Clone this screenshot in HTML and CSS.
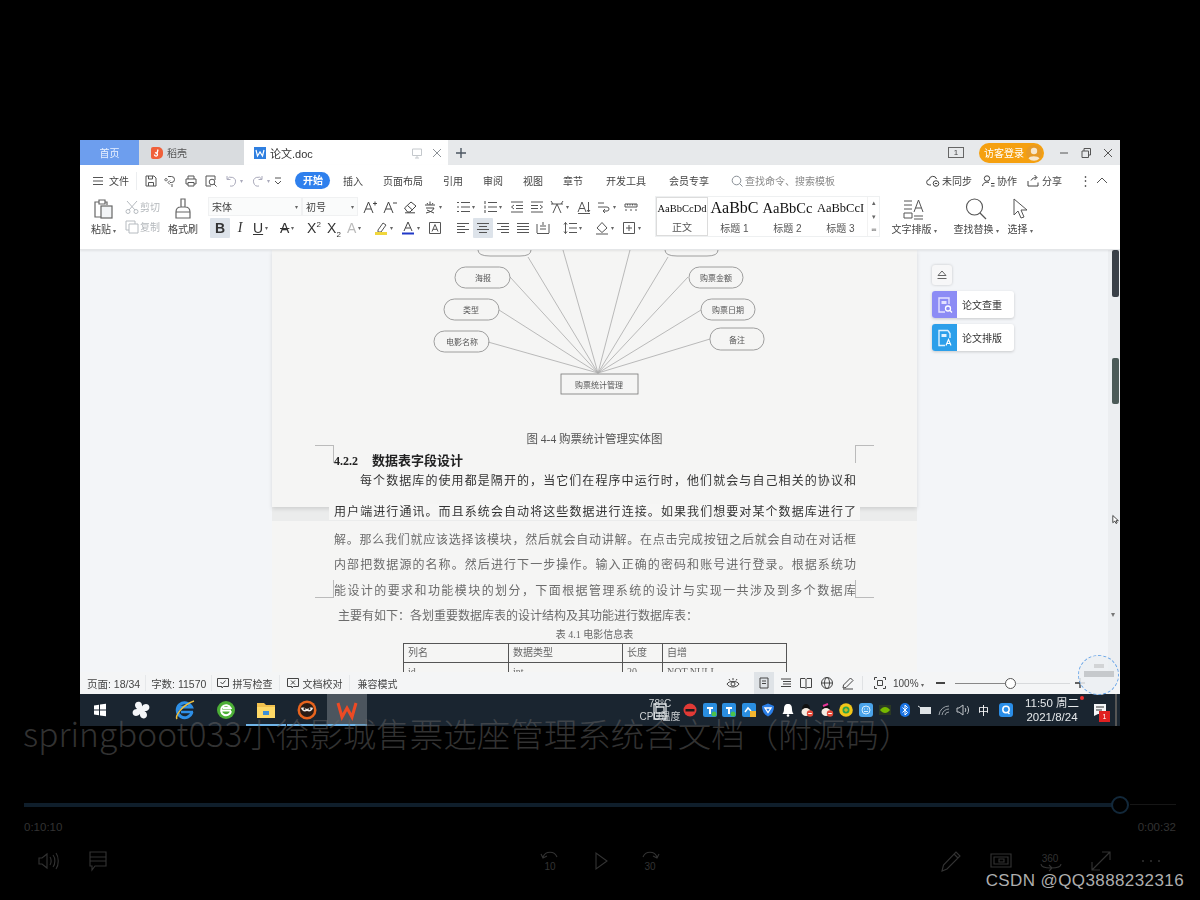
FILE: index.html
```html
<!DOCTYPE html>
<html lang="zh-CN">
<head>
<meta charset="utf-8">
<title>视频播放</title>
<link rel="stylesheet" href="styles.css">
</head>
<body>
<div class="player">
  <main class="screen">
    <div class="tabbar">
      <div class="tab tab-home">首页</div>
      <div class="tab tab-shell"><svg class="i14" viewBox="0 0 14 14"><path d="M3 1h5a5 5 0 0 1 5 5v2a5 5 0 0 1-5 5H3a2 2 0 0 1-2-2V3a2 2 0 0 1 2-2z" fill="#f0603a"/><path d="M8 3.500 7 7.500 5 6.500M7 7.500a1.500 1.500 0 1 1-2.500 1" fill="none" stroke="#fff" stroke-width="1.300"/></svg>稻壳</div>
      <div class="tab tab-doc"><svg class="i14" viewBox="0 0 14 14"><rect x="1" y="1" width="12" height="12" fill="#2f7fe0"/><path d="M3 4l1.500 6L7 6l2.500 4L11 4" fill="none" stroke="#fff" stroke-width="1.200"/></svg><span class="doc-name">论文.doc</span>
        <svg class="i12 doc-pin" viewBox="0 0 12 12"><path d="M1.500 2h9v6.500h-9zM6 8.500V11M4 11h4" fill="none" stroke="#c4c8cc"/></svg>
        <svg class="i12" viewBox="0 0 12 12"><path d="M2 2l8 8M10 2l-8 8" stroke="#8d9297" fill="none"/></svg>
      </div>
      <div class="tab-plus"><svg class="i12" viewBox="0 0 12 12"><path d="M6 1v10M1 6h10" stroke="#4c5661" stroke-width="1.400" fill="none"/></svg></div>
      <div class="tab-right">
        <div class="page-badge">1</div>
        <div class="login">访客登录<span class="avatar"><svg viewBox="0 0 16 16"><circle cx="8" cy="8" r="8" fill="#e79a25"/><circle cx="8" cy="6" r="3.200" fill="#f7e6ca"/><path d="M2.500 13.500c1-3 9.500-3 11 0a8 8 0 0 1-11 0z" fill="#f7e6ca"/></svg></span></div>
        <svg class="i12" viewBox="0 0 12 12"><path d="M2 6h8" stroke="#555" fill="none"/></svg>
        <svg class="i12" viewBox="0 0 12 12"><path d="M2 4h6.500v6.500H2zM4 4V1.500h6.500V8H8.500" stroke="#555" fill="none"/></svg>
        <svg class="i12" viewBox="0 0 12 12"><path d="M2 2l8 8M10 2l-8 8" stroke="#555" fill="none"/></svg>
      </div>
    </div>

    <div class="ribbon">
      <div class="menu">
        <div class="file-menu"><svg class="i12" viewBox="0 0 12 12"><path d="M1 2.500h10M1 6h10M1 9.500h10" stroke="#555" fill="none"/></svg>文件</div>
        <div class="quick">
          <svg class="i14" viewBox="0 0 14 14"><path d="M2 2h8l2 2v8H2zM4.500 2v3h4V2M4.500 12V8.500h5V12" fill="none" stroke="#555"/></svg>
          <svg class="i14" viewBox="0 0 14 14"><path d="M4 2.500h3.500a3 3 0 0 1 0 6H6M6 6.500 4 8.500l2 2M2 4.500a1.200 1.200 0 1 0 .1 0M8 10v3" fill="none" stroke="#555"/></svg>
          <svg class="i14" viewBox="0 0 14 14"><path d="M4 5V2h6v3M4 10H2V5h10v5h-2M4 8.500h6V12H4z" fill="none" stroke="#555"/></svg>
          <svg class="i14" viewBox="0 0 14 14"><path d="M11 6V2H2v10h5" fill="none" stroke="#555"/><circle cx="8" cy="8" r="2.800" fill="none" stroke="#555"/><path d="M10 10l2.500 2.500" stroke="#555"/></svg>
          <svg class="i14 dim" viewBox="0 0 14 14"><path d="M3 2v3.500h3.500M3 5.500A4.500 4.500 0 1 1 6 12" fill="none" stroke="#aab"/></svg><span class="caret dim-caret">▾</span>
          <svg class="i14 dim redo" viewBox="0 0 14 14"><path d="M11 2v3.500H7.500M11 5.500A4.500 4.500 0 1 0 8 12" fill="none" stroke="#aab"/></svg><span class="caret dim-caret">▾</span>
          <svg class="i12 more" viewBox="0 0 12 12"><path d="M3 3h6M3 6l3 3 3-3" fill="none" stroke="#555"/></svg>
        </div>
        <div class="tabs-menu">
          <span class="pill">开始</span><span>插入</span><span>页面布局</span><span>引用</span><span>审阅</span><span>视图</span><span>章节</span><span class="wide-gap">开发工具</span><span class="wide-gap">会员专享</span>
        </div>
        <div class="search"><svg class="i12" viewBox="0 0 12 12"><circle cx="5.500" cy="5.500" r="4.300" fill="none" stroke="#8a9097"/><path d="M8.500 8.500l3 3" stroke="#8a9097"/></svg>查找命令、搜索模板</div>
        <div class="actions">
          <span class="act"><svg class="i14" viewBox="0 0 14 14"><path d="M5 11H3.500a2.700 2.700 0 0 1-.3-5.400 3.800 3.800 0 0 1 7.400-.6" fill="none" stroke="#444"/><circle cx="10" cy="9.500" r="2.800" fill="none" stroke="#444"/><path d="M8.800 9.500h2.400" stroke="#444"/></svg>未同步</span>
          <span class="act"><svg class="i14" viewBox="0 0 14 14"><circle cx="6" cy="4.500" r="2.700" fill="none" stroke="#444"/><path d="M1.500 12c.5-3.500 4-4.500 6.500-3.500M10 9.500h3.500M10 12h3.500" fill="none" stroke="#444"/></svg>协作</span>
          <span class="act"><svg class="i14" viewBox="0 0 14 14"><path d="M2 7v5h10V8.500M5 6.500c1-2 3-3 5.500-3M8.500 1l2.500 2.500L8.500 6" fill="none" stroke="#444"/></svg>分享</span>
          <span class="kebab">⋮</span>
          <svg class="i12" viewBox="0 0 12 12"><path d="M1 8l5-5 5 5" fill="none" stroke="#555"/></svg>
        </div>
      </div>

      <div class="tools">
        <div class="clip">
          <div class="big-btn paste">
            <svg class="i24" viewBox="0 0 24 24"><path d="M7 5H3v15h6M7 3h6v4H7zM13 5h2v3" fill="none" stroke="#666" stroke-width="1.200"/><rect x="9" y="9" width="11" height="12" fill="#f2f4f6" stroke="#666" stroke-width="1.200"/></svg>
            <span>粘贴<i class="caret">▾</i></span>
          </div>
          <div class="clip-small">
            <span class="muted"><svg class="i14" viewBox="0 0 14 14"><path d="M2 1l8 9M12 1 4 10" stroke="#b6bbc0" fill="none"/><circle cx="3" cy="11.500" r="2" fill="none" stroke="#b6bbc0"/><circle cx="11" cy="11.500" r="2" fill="none" stroke="#b6bbc0"/></svg>剪切</span>
            <span class="muted"><svg class="i14" viewBox="0 0 14 14"><path d="M4 4h9v9H4zM4 10H1V1h9v3" fill="none" stroke="#b6bbc0"/></svg>复制</span>
          </div>
          <div class="big-btn painter">
            <svg class="i24" viewBox="0 0 24 24"><path d="M10 2h4v8h-4zM5 15c0-3 2-5 5-5h4c3 0 5 2 5 5v6H5zM5 15h14" fill="none" stroke="#666" stroke-width="1.200"/></svg>
            <span>格式刷</span>
          </div>
        </div>

        <div class="font-group">
          <div class="t-row">
            <div class="combo combo-font">宋体<i class="caret">▾</i></div>
            <div class="combo combo-size">初号<i class="caret">▾</i></div>
            <span class="t first"><svg class="i14" viewBox="0 0 14 14"><path d="M1 13 5.500 2 10 13M2.800 9h5.400M10 3.500h4M12 1.500v4" fill="none" stroke="#444"/></svg></span>
            <span class="t"><svg class="i14" viewBox="0 0 14 14"><path d="M1 13 5.500 2 10 13M2.800 9h5.400M10 3h4" fill="none" stroke="#444"/></svg></span>
            <span class="t"><svg class="i14" viewBox="0 0 14 14"><path d="M1.500 8 8 2l5 4-6 6H4.500zM4.500 5.500l5 4.500M2 12.800h10" fill="none" stroke="#444"/></svg></span>
            <span class="t w27"><svg class="i14" viewBox="0 0 14 14"><path d="M2 5h10M7 1.500V5M4 3l1 1.500M10 3 9 4.500M3 8h8M11 8c-1 3-4 4-8 5M4 10c2 1 5 2 7 3" fill="none" stroke="#444"/></svg><i class="caret">▾</i></span>
          </div>
          <div class="t-row">
            <span class="t on"><b class="fmt">B</b></span>
            <span class="t"><i class="fmt ital">I</i></span>
            <span class="t w27"><span class="fmt under">U</span><i class="caret">▾</i></span>
            <span class="t w27"><span class="fmt strike">A</span><i class="caret">▾</i></span>
            <span class="t"><span class="fmt">X<sup>2</sup></span></span>
            <span class="t"><span class="fmt">X<sub>2</sub></span></span>
            <span class="t w27"><span class="fmt faded">A</span><i class="caret">▾</i></span>
            <span class="t w27"><svg class="i14" viewBox="0 0 14 14"><path d="M4 9l5-7 3 2-5 7H4z" fill="none" stroke="#555"/><rect x="1" y="11" width="12" height="3" fill="#f0d63c"/></svg><i class="caret">▾</i></span>
            <span class="t w27"><svg class="i14" viewBox="0 0 14 14"><path d="M3 10 7 1l4 9M4.500 7h5" fill="none" stroke="#444"/><rect x="1" y="11.500" width="12" height="2" fill="#2038c8"/></svg><i class="caret">▾</i></span>
            <span class="t"><svg class="i14" viewBox="0 0 14 14"><path d="M1.500 1.500h11v11h-11zM4 10.500 7 3.500l3 7M5 8.300h4" fill="none" stroke="#555"/></svg></span>
          </div>
        </div>

        <div class="para-group">
          <div class="t-row">
            <span class="t w27"><svg class="i14" viewBox="0 0 14 14"><path d="M5 2.500h9M5 7h9M5 11.500h9M1 2.500h2M1 7h2M1 11.500h2" fill="none" stroke="#555" stroke-width="1.100"/></svg><i class="caret">▾</i></span>
            <span class="t w27"><svg class="i14" viewBox="0 0 14 14"><path d="M5 2.500h9M5 7h9M5 11.500h9M2 1v3M2 5.500v3M2 10v3" fill="none" stroke="#555" stroke-width="1.100"/></svg><i class="caret">▾</i></span>
            <span class="t"><svg class="i14" viewBox="0 0 14 14"><path d="M1 2h12M6 5.500h7M6 8.500h7M1 12h12M4 5 1.500 7 4 9" fill="none" stroke="#555"/></svg></span>
            <span class="t"><svg class="i14" viewBox="0 0 14 14"><path d="M1 2h12M1 5.500h7M1 8.500h7M1 12h12M10 5l2.500 2L10 9" fill="none" stroke="#555"/></svg></span>
            <span class="t w27"><svg class="i14" viewBox="0 0 14 14"><path d="M1 4h12M3 13l4-9 4 9M1 1l2 3M13 1l-2 3" fill="none" stroke="#555"/></svg><i class="caret">▾</i></span>
            <span class="t"><svg class="i14" viewBox="0 0 14 14"><path d="M1 12 5 2l4 10M2.500 8.500h5M11.500 2v10M10 10l1.500 2 1.500-2M1 13.500h12" fill="none" stroke="#555"/></svg></span>
            <span class="t w27"><svg class="i14" viewBox="0 0 14 14"><path d="M1 3h6M1 7h9a2 2 0 0 1 0 4H6M8 9l-2 2 2 2" fill="none" stroke="#555"/></svg><i class="caret">▾</i></span>
            <span class="t"><svg class="i14" viewBox="0 0 14 14"><path d="M1 4h12v3H1zM3.500 4v1.500M6 4v1.500M8.500 4v1.500M11 4v1.500M1 10h2M6 10h2M11 10h2" fill="none" stroke="#555"/></svg></span>
          </div>
          <div class="t-row">
            <span class="t"><svg class="i14" viewBox="0 0 14 14"><path d="M1 2.500h12M1 5.500h8M1 8.500h12M1 11.500h8" fill="none" stroke="#555"/></svg></span>
            <span class="t on"><svg class="i14" viewBox="0 0 14 14"><path d="M1 2.500h12M3 5.500h8M1 8.500h12M3 11.500h8" fill="none" stroke="#555"/></svg></span>
            <span class="t"><svg class="i14" viewBox="0 0 14 14"><path d="M1 2.500h12M5 5.500h8M1 8.500h12M5 11.500h8" fill="none" stroke="#555"/></svg></span>
            <span class="t"><svg class="i14" viewBox="0 0 14 14"><path d="M1 2.500h12M1 5.500h12M1 8.500h12M1 11.500h12" fill="none" stroke="#555"/></svg></span>
            <span class="t"><svg class="i14" viewBox="0 0 14 14"><path d="M1 12.500h12M1 3v9M13 3v9M4 5h6M4 8h6M7 1v3" fill="none" stroke="#555"/></svg></span>
            <span class="t w27 spacing"><svg class="i14" viewBox="0 0 14 14"><path d="M6 2.500h8M6 7h8M6 11.500h8M2.500 1.500v11M1 3.500l1.500-2 1.500 2M1 10.500l1.500 2 1.500-2" fill="none" stroke="#555"/></svg><i class="caret">▾</i></span>
            <span class="t w27 shade"><svg class="i14" viewBox="0 0 14 14"><path d="M7 1.500 12 7l-5 4.500L2 7zM1 13h12" fill="none" stroke="#555"/></svg><i class="caret">▾</i></span>
            <span class="t w27"><svg class="i14" viewBox="0 0 14 14"><path d="M1.500 1.500h11v11h-11zM7 4v6M4 7h6" fill="none" stroke="#555"/></svg><i class="caret">▾</i></span>
          </div>
        </div>

        <div class="styles">
          <div class="style sel"><span class="pv pv0">AaBbCcDd</span><span class="lbl">正文</span></div>
          <div class="style"><span class="pv pv1">AaBbC</span><span class="lbl">标题 1</span></div>
          <div class="style"><span class="pv pv2">AaBbCc</span><span class="lbl">标题 2</span></div>
          <div class="style"><span class="pv pv3">AaBbCcI</span><span class="lbl">标题 3</span></div>
          <div class="style-scroll"><span>▴</span><span>▾</span><span>≂</span></div>
        </div>

        <div class="big-btn layout-btn">
          <svg class="i24" viewBox="0 0 24 24"><path d="M2 4h8M2 8h8M2 12h8M12 15 16.500 3 21 15M13.500 11h6M2 16h8v5H2zM12 19h9M12 22h9" fill="none" stroke="#555"/></svg>
          <span>文字排版<i class="caret">▾</i></span>
        </div>
        <div class="big-btn find-btn">
          <svg class="i24" viewBox="0 0 24 24"><circle cx="10.500" cy="10" r="8" fill="none" stroke="#555" stroke-width="1.100"/><path d="M16 16l6 6" stroke="#555" stroke-width="1.200"/></svg>
          <span>查找替换<i class="caret">▾</i></span>
        </div>
        <div class="big-btn select-btn">
          <svg class="i24" viewBox="0 0 24 24"><path d="M6 2v16l4-4 3 7 3-1-3-7h6z" fill="none" stroke="#555"/></svg>
          <span>选择<i class="caret">▾</i></span>
        </div>
      </div>
    </div>

    <div class="workspace">
      <div class="doc">
        <section class="sheet sheet-top">
          <svg class="er" viewBox="0 0 645 182" width="645" height="182">
            <g class="lines">
              <path d="M326 123 256 7M326 123 291 0M326 123 358 0M326 123 396 7M326 123 238 27M326 123 227 60M326 123 216 92M326 123 416 27M326 123 429 60M326 123 438 89"/>
            </g>
            <g class="nodes">
              <path d="M206 0q0 6 12 6h30q11 0 11-6M393 0q0 6 12 6h30q11 0 11-6"/>
              <rect x="183" y="17" width="55" height="21" rx="10.500"/>
              <rect x="172" y="49" width="55" height="21" rx="10.500"/>
              <rect x="162" y="81" width="55" height="21" rx="10.500"/>
              <rect x="417" y="17" width="54" height="21" rx="10.500"/>
              <rect x="429" y="49" width="54" height="21" rx="10.500"/>
              <rect x="438" y="78" width="54" height="22" rx="10.500"/>
              <rect class="box" x="289" y="124" width="77" height="20"/>
            </g>
            <g class="labels">
              <text x="211" y="31">海报</text>
              <text x="199" y="63">类型</text>
              <text x="190" y="95">电影名称</text>
              <text x="444" y="31">购票金额</text>
              <text x="456" y="63">购票日期</text>
              <text x="465" y="93">备注</text>
              <text x="327" y="138">购票统计管理</text>
            </g>
          </svg>
          <p class="caption">图 4-4 购票统计管理实体图</p>
          <h3 class="heading"><span class="hnum">4.2.2</span>数据表字段设计</h3>
          <p class="line indent">每个数据库的使用都是隔开的，当它们在程序中运行时，他们就会与自己相关的协议和</p>
          <span class="crop crop-tl"></span><span class="crop crop-tr"></span>
        </section>
        <div class="sheet-gap">
          <p class="line strip">用户端进行通讯。而且系统会自动将这些数据进行连接。如果我们想要对某个数据库进行了</p>
        </div>
        <section class="sheet sheet-bottom">
          <div class="smear">
            <p class="line">解。那么我们就应该选择该模块，然后就会自动讲解。在点击完成按钮之后就会自动在对话框</p>
            <p class="line">内部把数据源的名称。然后进行下一步操作。输入正确的密码和账号进行登录。根据系统功</p>
            <p class="line">能设计的要求和功能模块的划分，下面根据管理系统的设计与实现一共涉及到多个数据库</p>
            <p class="line last">主要有如下：各划重要数据库表的设计结构及其功能进行数据库表：</p>
            <p class="tcap">表 4.1 电影信息表</p>
            <table class="dtable">
              <tr><td class="c1">列名</td><td class="c2">数据类型</td><td class="c3">长度</td><td class="c4">自增</td></tr>
              <tr><td>id</td><td>int</td><td>20</td><td>NOT NULL</td></tr>
            </table>
          </div>
          <span class="crop crop-bl"></span><span class="crop crop-br"></span>
        </section>
      </div>
      <aside class="side">
        <div class="collapse"><svg class="i12" viewBox="0 0 12 12"><path d="M2 6.500 6 2l4 4.500zM1.500 9.500h9" fill="none" stroke="#666"/></svg></div>
        <div class="card">
          <span class="card-ic violet"><svg class="i18" viewBox="0 0 18 18"><path d="M13 8V2H3v14h6" fill="none" stroke="#e4e2ff" stroke-width="1.400"/><path d="M5.500 5h5v3h-5z" fill="#e4e2ff"/><circle cx="12" cy="12.500" r="2.500" fill="none" stroke="#fff" stroke-width="1.300"/><path d="M14 14.500l2 2" stroke="#fff" stroke-width="1.300"/></svg></span>
          <span class="card-t">论文查重</span>
        </div>
        <div class="card">
          <span class="card-ic blue"><svg class="i18" viewBox="0 0 18 18"><path d="M12 1.500H3v15h6M12 1.500l2 3V9" fill="none" stroke="#dff1ff" stroke-width="1.400"/><path d="M5.500 5h5v3h-5z" fill="#dff1ff"/><path d="M10 16.500l2.500-6 2.500 6M11 14.500h3" fill="none" stroke="#fff" stroke-width="1.200"/></svg></span>
          <span class="card-t">论文排版</span>
        </div>
      </aside>
      <div class="scrollbar">
        <span class="sb-dark"></span><span class="sb-thumb"></span>
        <span class="sb-arrow">▾</span>
      </div>
      <svg class="pointer" viewBox="0 0 10 12" width="8" height="11"><path d="M1 1v9l2.500-2 1.500 3 1.500-.8L5 7.500h3z" fill="#fff" stroke="#222"/></svg>
    </div>

    <footer class="status">
      <div class="st-left">
        <span class="st-item count">页面: 18/34</span>
        <span class="st-item count">字数: 11570</span>
        <span class="st-item check"><svg class="i12" viewBox="0 0 12 12"><path d="M.5 1.500h11v8H6.500L5 11V9.500H.5zM3.500 5l2 2 3-3.500" fill="none" stroke="#444"/></svg>拼写检查</span>
        <span class="st-item check"><svg class="i12" viewBox="0 0 12 12"><path d="M.5 1.500h11v8H6.500L5 11V9.500H.5zM4 3.500l4 4M8 3.500l-4 4" fill="none" stroke="#444"/></svg>文档校对</span>
        <span class="st-item plain">兼容模式</span>
      </div>
      <div class="st-right">
        <svg class="i14" viewBox="0 0 14 14"><path d="M1 8c2-3.500 10-3.500 12 0-2 4-10 4-12 0zM3 3l1 1.500M7 2v2M11 3l-1 1.500" fill="none" stroke="#444"/><circle cx="7" cy="8" r="2" fill="none" stroke="#444"/></svg>
        <span class="view on"><svg class="i12" viewBox="0 0 12 12"><path d="M2 1h8v10H2zM4 4h4M4 6.500h4" fill="none" stroke="#444"/></svg></span>
        <svg class="i12" viewBox="0 0 12 12"><path d="M1 2h10M3 4.500h8M3 7h8M1 9.500h10" fill="none" stroke="#444"/></svg>
        <svg class="i14" viewBox="0 0 14 14"><path d="M1.500 2.500h4.500L7 3.500l1-1h4.500v9H8l-1 1-1-1H1.500zM7 3.500v9" fill="none" stroke="#444"/></svg>
        <svg class="i14" viewBox="0 0 14 14"><circle cx="7" cy="7" r="5.500" fill="none" stroke="#444"/><ellipse cx="7" cy="7" rx="2.500" ry="5.500" fill="none" stroke="#444"/><path d="M1.500 7h11" stroke="#444"/></svg>
        <svg class="i14" viewBox="0 0 14 14"><path d="M2 12l.5-3L9.500 2l2.500 2.500-7 7zM2 13h10" fill="none" stroke="#444"/></svg>
        <span class="st-sep"></span>
        <svg class="i14" viewBox="0 0 14 14"><path d="M4 1.500H1.500V4M10 1.500h2.500V4M4 12.500H1.500V10M10 12.500h2.500V10M4.500 4.500h5v5h-5z" fill="none" stroke="#444"/></svg>
        <span class="zoom-val">100%<i class="caret">▾</i></span>
        <span class="minus"></span>
        <span class="slider"><span class="knob"></span></span>
        <svg class="i12" viewBox="0 0 12 12"><path d="M6 1v10M1 6h10" stroke="#333" stroke-width="1.300" fill="none"/></svg>
      </div>
    </footer>

    <div class="taskbar">
      <div class="apps">
        <span class="app"><svg class="i14" viewBox="0 0 14 14"><path d="M1 2.500 6 1.800v4.700H1zM7 1.600 13 .8v5.700H7zM1 7.500h5v4.700l-5-.7zM7 7.500h6v5.700l-6-.8z" fill="#fff"/></svg></span>
        <span class="app"><svg class="i20" viewBox="0 0 20 20"><path d="M10 10C7 10 4 8 4 5s3-4 5-3 3 4 1 8zM10 10c0-3 2-6 5-6s4 3 3 5-4 3-8 1zM10 10c3 0 6 2 6 5s-3 4-5 3-3-4-1-8zM10 10c0 3-2 6-5 6s-4-3-3-5 4-3 8-1z" fill="#f4f6f8"/></svg></span>
        <span class="app ie"><svg class="i22" viewBox="0 0 22 22"><path d="M18 13a7.500 7.500 0 1 1-.5-5H9.500c-2 0-4 1-5 3" fill="none" stroke="#2e8fe6" stroke-width="3"/><path d="M7 13h12" stroke="#2e8fe6" stroke-width="2.500"/><path d="M3 20C1 17 8 6 20 2" fill="none" stroke="#f0c040" stroke-width="1.500"/></svg></span>
        <span class="app"><svg class="i20" viewBox="0 0 20 20"><circle cx="10" cy="10" r="9" fill="#4caf36"/><path d="M15 11a5 5 0 1 1-.5-3H7M6 10.500h9" fill="none" stroke="#fff" stroke-width="2"/></svg></span>
        <span class="app running"><svg class="i20" viewBox="0 0 20 20"><path d="M1 3h7l2 2h9v13H1z" fill="#f2c14e"/><rect x="1" y="7" width="18" height="11" fill="#ffd966"/><rect x="7" y="11" width="6" height="4" fill="#3d8fd8"/></svg></span>
        <span class="app running"><svg class="i20" viewBox="0 0 20 20"><circle cx="10" cy="10" r="9.500" fill="#e8641e"/><circle cx="10" cy="10" r="7" fill="#2a1c16"/><path d="M4 8c2-1 4 0 6 1 2-1 4-2 6-1-1 3-3 4-6 3-3 1-5 0-6-3z" fill="#f0ece8"/><circle cx="7.500" cy="9" r="1" fill="#222"/><circle cx="12.500" cy="9" r="1" fill="#222"/></svg></span>
        <span class="app running active"><svg class="i22" viewBox="0 0 22 22"><path d="M2 4l4 14 5-9 5 9 4-14" fill="none" stroke="#ee4a24" stroke-width="3"/></svg></span>
      </div>
      <div class="tray">
        <div class="cpu"><span>78°C</span><span>CPU温度</span>
          <svg class="cpu-ic" viewBox="0 0 18 20" width="18" height="20"><path d="M3 2h12v15H3zM5 5h8v6H5zM5 14h8" fill="none" stroke="#dfe3e6" stroke-width="1.300"/></svg>
        </div>
        <div class="tray-icons">
          <svg class="i14" viewBox="0 0 14 14"><circle cx="7" cy="7" r="6.500" fill="#e23a36"/><path d="M2.500 6h9v2.500h-9z" fill="#1a1a1a"/></svg>
          <svg class="i14" viewBox="0 0 14 14"><rect width="14" height="14" rx="2" fill="#2a8ee0"/><path d="M4 5h6M7 5v6" stroke="#fff" stroke-width="2"/><circle cx="11" cy="11" r="2.500" fill="#4cc34c"/></svg>
          <svg class="i14" viewBox="0 0 14 14"><rect width="14" height="14" rx="2" fill="#2a8ee0"/><path d="M4 5h6M7 5v6" stroke="#fff" stroke-width="2"/><circle cx="11" cy="11" r="2.500" fill="#4cc34c"/></svg>
          <svg class="i14" viewBox="0 0 14 14"><rect width="14" height="14" rx="2" fill="#2a8ee0"/><path d="M3 9l3-4 3 3" stroke="#fff" fill="none" stroke-width="1.500"/><rect x="8" y="8" width="6" height="6" fill="#f2b530"/></svg>
          <svg class="i14" viewBox="0 0 14 14"><path d="M7 .5 13 3c0 5-2 8.500-6 10.500C3 11.500 1 8 1 3z" fill="#2a7fe8"/><path d="M4 5h6L7 9.500z" fill="none" stroke="#fff" stroke-width="1.300"/></svg>
          <svg class="i14" viewBox="0 0 14 14"><path d="M7 1c3 0 4 2 4 5s1 4 1.500 5h-11C2 10 3 9 3 6s1-5 4-5z" fill="#fff"/><circle cx="7" cy="12.500" r="1.300" fill="#fff"/></svg>
          <svg class="i14" viewBox="0 0 14 14"><ellipse cx="6" cy="6" rx="4" ry="5" fill="#111"/><ellipse cx="6" cy="9" rx="4.500" ry="4" fill="#f4ece2"/><circle cx="10" cy="10.500" r="3.200" fill="#e24a3a"/><path d="M8.200 10.500h3.600" stroke="#fff"/></svg>
          <svg class="i14" viewBox="0 0 14 14"><ellipse cx="6" cy="6" rx="4" ry="5" fill="#111"/><ellipse cx="6" cy="9" rx="4.500" ry="4" fill="#f4ece2"/><path d="M3 3 8 1" stroke="#e8379a" stroke-width="2"/><circle cx="10" cy="10.500" r="3.200" fill="#e24a3a"/><path d="M8.200 10.500h3.600" stroke="#fff"/></svg>
          <svg class="i14" viewBox="0 0 14 14"><circle cx="7" cy="7" r="6.800" fill="#f2c518"/><circle cx="7" cy="7" r="3.500" fill="#2ea34a"/><path d="M7 5v4M5 7h4" stroke="#f2c518"/></svg>
          <svg class="i14" viewBox="0 0 14 14"><rect width="14" height="14" rx="3" fill="#4aa3ea"/><circle cx="7" cy="7" r="4" fill="none" stroke="#d8eeff"/><path d="M5 6h1M8 6h1M5 8.500h4" stroke="#d8eeff"/></svg>
          <svg class="i14" viewBox="0 0 14 14"><rect x="1" y="2" width="12" height="10" fill="#2b3a24"/><path d="M2 7c3-4 7-4 10 0-3 4-7 4-10 0z" fill="#76b900"/></svg>
          <svg class="i14" viewBox="0 0 14 14"><rect x="2" width="10" height="14" rx="5" fill="#1b74e4"/><path d="M4.500 4.500l5 5L7 12V2l2.500 2.500-5 5" fill="none" stroke="#fff"/></svg>
          <svg class="i14" viewBox="0 0 14 14"><rect x="3" y="4" width="11" height="7" fill="#dfe3e6"/><path d="M1 3l3 2" stroke="#dfe3e6"/></svg>
          <svg class="i14" viewBox="0 0 14 14"><path d="M2 12a10 10 0 0 1 10-9M5 12a7 7 0 0 1 7-6M8 12a4 4 0 0 1 4-3" fill="none" stroke="#9ca3a9"/></svg>
          <svg class="i14" viewBox="0 0 14 14"><path d="M1 5v4h2l4 3V2L3 5zM9 5c1 1 1 3 0 4M11 3c2 2 2 6 0 8" fill="none" stroke="#bfc4c8"/></svg>
          <span class="ime">中</span>
          <svg class="i14 q" viewBox="0 0 14 14"><rect width="14" height="14" rx="3" fill="#2a8ee8"/><circle cx="7" cy="6.500" r="3.200" fill="none" stroke="#fff" stroke-width="1.500"/><path d="M8.500 9l2 2" stroke="#fff" stroke-width="1.500"/></svg>
        </div>
        <div class="clock"><span>11:50 周二</span><span>2021/8/24</span></div>
        <span class="red-dot"></span>
        <div class="notify"><svg class="i14" viewBox="0 0 14 14"><path d="M1 1h12v10H5L1 13z" fill="#f4f5f6"/><path d="M3 4h8M3 7h6" stroke="#333"/></svg><span class="notify-n">1</span></div>
        <span class="tb-edge"></span>
      </div>
    </div>

    <div class="lens"><span class="lens-a"></span><span class="lens-b"></span></div>
  </main>

  <h1 class="subtitle">springboot033小徐影城售票选座管理系统含文档（附源码）</h1>

  <div class="seek">
    <div class="seek-bar"><span class="seek-fill"></span><span class="seek-knob"></span><span class="seek-rest"></span></div>
    <div class="times"><span>0:10:10</span><span>0:00:32</span></div>
  </div>

  <div class="controls">
    <div class="ctl-group">
      <svg class="c24" viewBox="0 0 24 24"><path d="M3 9v6h3l5 4V5L6 9zM14 8c1.500 2 1.500 6 0 8M17 6c2.500 3 2.500 9 0 12M20 4c3 4 3 12 0 16"/></svg>
      <svg class="c24" viewBox="0 0 24 24"><path d="M4 3h16v14H9l-3 4v-4H4zM4 8h16M4 12h16"/></svg>
    </div>
    <div class="ctl-group">
      <svg class="c24" viewBox="0 0 24 24"><path d="M5 8a7.500 7.500 0 0 1 14 0M3 5l2 4 4-2"/><text class="ctl-num" x="12" y="21">10</text></svg>
      <svg class="c24" viewBox="0 0 24 24"><path d="M8 4v16l11-8z"/></svg>
      <svg class="c24" viewBox="0 0 24 24"><path d="M19 8A7.500 7.500 0 0 0 5 8M21 5l-2 4-4-2"/><text class="ctl-num" x="12" y="21">30</text></svg>
    </div>
    <div class="ctl-group end">
      <svg class="c24" viewBox="0 0 24 24"><path d="M3 22l1.500-6L17 3l4 4L8 20zM15 5l4 4"/></svg>
      <svg class="c24" viewBox="0 0 24 24"><path d="M2 5h20v13H2zM5 8h14v7H5z"/><path d="M10 10h5v3h-5z"/></svg>
      <svg class="c24" viewBox="0 0 24 24"><path d="M2 15c0 3 5 4 10 4 5 0 10-1 10-4M10 16l3 3-3 3"/><text class="ctl-num" x="11" y="13">360</text></svg>
      <svg class="c24" viewBox="0 0 24 24"><path d="M3 21 21 3M13 3h8v8M3 13v8h8"/></svg>
      <svg class="c24 dots" viewBox="0 0 24 24"><circle cx="4" cy="12" r="1"/><circle cx="12" cy="12" r="1"/><circle cx="20" cy="12" r="1"/></svg>
    </div>
  </div>

  <div class="watermark">CSDN @QQ3888232316</div>
</div>
</body>
</html>
```
FILE: styles.css
```css
* { box-sizing: border-box; }
html, body { margin: 0; padding: 0; }
body {
  width: 1200px; height: 900px; overflow: hidden; background: #000;
  font-family: "Liberation Sans", "Noto Sans CJK SC", sans-serif;
}
p, h1, h3 { margin: 0; font-weight: normal; }
svg { display: block; flex: none; }
.i12 { width: 12px; height: 12px; }
.i14 { width: 14px; height: 14px; }
.i18 { width: 18px; height: 18px; }
.i20 { width: 20px; height: 20px; }
.i22 { width: 22px; height: 22px; }
.i24 { width: 24px; height: 24px; }
.caret { font-style: normal; font-size: 6px; color: #666; margin-left: 2px; }

.player { position: relative; width: 1200px; height: 900px; padding-top: 140px; }

.screen {
  position: relative; width: 1040px; height: 586px; margin-left: 80px;
  display: flex; flex-direction: column; background: #fff; overflow: hidden;
  font-size: 10px; color: #444; filter: blur(0.35px);
}

/* tabs */
.tabbar { height: 25px; flex: none; display: flex; align-items: stretch; background: #e7e9eb; }
.tab { display: flex; align-items: center; }
.tab-home { width: 59px; justify-content: center; background: #6d9eee; color: #eaf2ff; }
.tab-shell { width: 105px; padding-left: 11px; gap: 3px; background: #d9dcdf; color: #555; }
.tab-doc { width: 204px; padding-left: 9px; gap: 7px; background: #fff; color: #333; font-size: 11px; }
.doc-name { flex: 1; margin-left: -4px; }
.doc-pin { margin-right: 1px; }
.tab-doc .i12:last-child { margin-right: 5px; }
.tab-plus { width: 26px; display: flex; align-items: center; justify-content: center; }
.tab-right { margin-left: auto; display: flex; align-items: center; padding-right: 6px; gap: 10px; }
.page-badge {
  width: 16px; height: 11px; border: 1px solid #666; font-size: 8px; line-height: 9px;
  text-align: center; color: #444; margin-right: 5px;
}
.login {
  display: flex; align-items: center; height: 20px; width: 65px; padding-left: 5px; margin-right: 4px;
  background: #f5a00f; border-radius: 10px; color: #fff; justify-content: space-between; padding-right: 2px;
}
.avatar { width: 16px; height: 16px; display: block; }

/* ribbon */
.ribbon { height: 85px; flex: none; background: #fff; border-bottom: 1px solid #e4e6e8; box-shadow: 0 1px 2px rgba(0,0,0,.08); position: relative; z-index: 1; }
.menu { height: 31px; display: flex; align-items: center; }
.file-menu { display: flex; align-items: center; gap: 5px; width: 57px; padding-left: 12px; border-right: 1px solid #eceef0; height: 18px; }
.quick { display: flex; align-items: center; gap: 6px; width: 158px; padding-left: 7px; }
.quick .dim-caret { margin-left: -4px; margin-right: 2px; color: #aab; }
.quick .more { margin-left: -6px; }
.tabs-menu { display: flex; align-items: center; gap: 20px; }
.pill { background: #2f80ed; color: #fff; font-weight: bold; border-radius: 9px; padding: 2px 8px; line-height: 13px; width: 35px; text-align: center; white-space: nowrap; margin-right: -7px; }
.wide-gap { margin-left: 3px; }
.search { display: flex; align-items: center; gap: 2px; margin-left: 22px; color: #888; }
.actions { margin-left: auto; display: flex; align-items: center; gap: 9px; padding-right: 12px; }
.act { display: flex; align-items: center; gap: 2px; }
.kebab { font-size: 13px; color: #666; margin-left: 8px; width: 8px; }

.tools { height: 54px; display: flex; align-items: flex-start; }
.clip { display: flex; width: 128px; padding-left: 10px; height: 48px; }
.big-btn { display: flex; flex-direction: column; align-items: center; justify-content: space-between; height: 40px; white-space: nowrap; padding-top: 1px; }
.paste { width: 27px; }
.painter { width: 30px; margin-left: 8px; }
.clip-small { display: flex; flex-direction: column; justify-content: space-between; width: 43px; height: 40px; padding: 3px 0 2px 8px; }
.muted { display: flex; align-items: center; gap: 1px; color: #b4b8bc; }
.font-group { width: 245px; }
.para-group { width: 202px; }
.t-row { display: flex; align-items: center; height: 21px; }
.t-row + .t-row { margin-left: 2px; }
.combo { display: flex; align-items: center; justify-content: space-between; height: 19px; padding: 0 3px; background: #fafbfb; border: 1px solid #f0f1f2; }
.combo-font { width: 94px; }
.combo-size { width: 56px; }
.t { width: 20px; height: 20px; display: flex; align-items: center; justify-content: center; flex: none; }
.t.first { margin-left: 2px; }
.t.w27 { width: 27px; justify-content: flex-start; padding-left: 3px; }
.t.on { background: #dde3ea; border-radius: 1px; }
.fmt { font-size: 14px; color: #333; line-height: 14px; }
.ital { font-family: "Liberation Serif", serif; }
.under { text-decoration: underline; }
.strike { text-decoration: line-through; }
.faded { color: #bbb; }
.fmt sup, .fmt sub { font-size: 8px; line-height: 0; }
.para-group .t-row + .t-row { margin-left: 0; }
.spacing { margin-left: 7px; }
.shade { margin-left: 5px; }
.styles { display: flex; width: 225px; height: 41px; border: 1px solid #eef0f1; }
.style { width: 53px; display: flex; flex-direction: column; align-items: center; justify-content: space-between; overflow: hidden; padding: 2px 0 1px; flex: none; }
.style.sel { border: 1px solid #dcdcdc; width: 52px; }
.pv { font-family: "Liberation Serif", serif; color: #111; white-space: nowrap; line-height: 18px; height: 19px; }
.pv0 { font-size: 10.500px; }
.pv1 { font-size: 16px; }
.pv2 { font-size: 14.500px; }
.pv3 { font-size: 12.500px; }
.lbl { color: #555; }
.style-scroll { display: flex; flex-direction: column; justify-content: space-between; align-items: center; flex: 1; color: #666; font-size: 7px; line-height: 12px; border-left: 1px solid #f2f2f2; }
.layout-btn { width: 46px; margin-left: 11px; }
.find-btn { width: 46px; margin-left: 16px; }
.select-btn { width: 24px; margin-left: 9px; }

/* workspace */
.workspace { position: relative; flex: 1; min-height: 0; display: flex; background: #f3f5f8; overflow: hidden; }
.doc { width: 645px; margin-left: 192px; flex: none; display: flex; flex-direction: column; background: #ebecec; }
.sheet { position: relative; background: #f5f5f4; font-family: "Liberation Serif", "Noto Sans CJK SC", serif; color: #333; }
.sheet-top { height: 257px; flex: none; box-shadow: 0 2px 4px rgba(0,0,0,.12); }
.sheet-gap { height: 14px; flex: none; position: relative; z-index: 1; }
.sheet-bottom { flex: 1; min-height: 0; overflow: hidden; }
.er { width: 645px; height: 182px; }
.lines path { stroke: #a9a9a9; stroke-width: .8; fill: none; }
.nodes path, .nodes rect { fill: none; stroke: #888; stroke-width: .8; }
.labels text { font-size: 8px; text-anchor: middle; fill: #555; font-family: "Noto Sans CJK SC", sans-serif; }
.nodes .box { stroke: #777; }
.caption { text-align: center; font-size: 11.500px; line-height: 15px; color: #555; }
.heading { font-size: 13px; font-weight: bold; color: #222; padding: 6px 0 0 62px; line-height: 16px; height: 24px; }
.hnum { margin-right: 14px; font-size: 12px; }
.line { font-size: 12px; line-height: 16px; padding: 0 61px 0 62px; text-align: justify; text-align-last: justify; white-space: nowrap; color: #333; overflow: hidden; }
.line.indent { padding-left: 88px; margin-top: 2px; }
.line.strip { background: #f6f6f5; margin: -3px 57px 0; padding: 0 4px 0 5px; }
.smear { padding-top: 7px; color: #666; }
.smear .line { color: #6b6b6b; line-height: 25.300px; height: 25.300px; filter: blur(.6px); }
.smear .line.last { text-align-last: left; padding-left: 66px; }
.tcap { text-align: center; font-size: 10px; line-height: 14px; margin-top: -1px; color: #666; filter: blur(.5px); }
.dtable { border-collapse: collapse; margin: 1px 0 0 131px; width: 384px; font-size: 10px; color: #666; }
.dtable td { border: 1px solid #555; height: 19px; padding: 0 4px; line-height: 14px; }
.c1 { width: 105px; }
.c2 { width: 114px; }
.c3 { width: 40px; }
.crop { position: absolute; width: 19px; height: 18px; border: 0 solid #bbb; }
.crop-tl { left: 43px; top: 195px; border-width: 1px 1px 0 0; }
.crop-tr { left: 583px; top: 195px; border-width: 1px 0 0 1px; }
.crop-bl { left: 43px; top: 59px; border-width: 0 1px 1px 0; }
.crop-br { left: 583px; top: 59px; border-width: 0 0 1px 1px; }

.side { width: 191px; flex: none; padding: 15px 0 0 15px; display: flex; flex-direction: column; gap: 6px; }
.collapse { width: 20px; height: 20px; background: #f7f7f8; border-radius: 3px; box-shadow: 0 0 3px rgba(0,0,0,.2); display: flex; align-items: center; justify-content: center; }
.card { width: 82px; height: 27px; background: #fff; border-radius: 3px; box-shadow: 0 1px 3px rgba(0,0,0,.18); display: flex; align-items: center; overflow: hidden; color: #333; }
.card-ic { width: 25px; height: 27px; display: flex; align-items: center; justify-content: center; }
.violet { background: #8c8cf5; }
.blue { background: #2c9fea; }
.card-t { margin-left: 5px; }
.scrollbar { flex: 1; position: relative; background: #eceef1; }
.sb-dark { position: absolute; left: 4px; top: 0; width: 7px; height: 47px; background: #3a4048; border-radius: 2px; }
.sb-thumb { position: absolute; left: 4px; top: 108px; width: 7px; height: 46px; background: #4c5a58; border-radius: 2px; }
.sb-arrow { position: absolute; left: 3px; top: 360px; font-size: 8px; color: #777; }
.pointer { position: absolute; right: 0; top: 264px; }

/* status */
.status { height: 22px; flex: none; display: flex; align-items: center; justify-content: space-between; background: #f4f5f6; color: #444; font-size: 10px; position: relative; z-index: 1; }
.st-left { display: flex; align-items: center; padding-left: 7px; }
.st-item { display: flex; align-items: center; gap: 3px; height: 16px; border-right: 1px solid #e6e8ea; white-space: nowrap; }
.count { font-size: 10.500px; padding-right: 5px; margin-right: 5px; }
.check { padding-right: 7px; margin: 0 7px 0 0; }
.st-item.plain { border: 0; }
.st-right { display: flex; align-items: center; gap: 7px; padding-right: 34px; }
.view { width: 20px; height: 22px; display: flex; align-items: center; justify-content: center; }
.view.on { background: #dfe3e7; margin: 0 -1px 0 7px; }
.st-sep { width: 1px; height: 14px; background: #e0e2e4; margin: 0 3px 0 0; }
.zoom-val { width: 36px; font-size: 10px; white-space: nowrap; margin-left: -1px; }
.minus { width: 9px; height: 2px; background: #444; margin: 0 3px 0 0; }
.slider { position: relative; width: 115px; height: 1px; background: linear-gradient(to right, #888 48%, #d8dadc 48%); margin-right: -3px; }
.knob { position: absolute; left: 50px; top: -5px; width: 11px; height: 11px; border-radius: 50%; background: #fff; border: 1px solid #555; }

/* taskbar */
.taskbar { height: 32px; flex: none; display: flex; align-items: stretch; justify-content: space-between; background: #1a2530; color: #dfe3e6; }
.apps { display: flex; }
.app { width: 40px; display: flex; align-items: center; justify-content: center; margin-right: .500px; }
.app.ie { margin-left: 4px; }
.running { box-shadow: inset 0 -2px 0 #6fb4e8; }
.active { background: #4c555e; }
.tray { position: relative; display: flex; align-items: center; }
.cpu { position: relative; width: 42px; margin-right: 2px; display: flex; flex-direction: column; align-items: center; line-height: 13px; font-size: 10px; white-space: nowrap; color: #cfd3d6; }
.cpu-ic { position: absolute; left: 12px; top: 5px; }
.tray-icons { display: flex; align-items: center; gap: 5.500px; }
.ime { width: 14px; text-align: center; font-size: 11px; color: #fff; margin-left: 1px; }
.q { margin-left: 3px; }
.clock { width: 62px; margin-left: 8px; display: flex; flex-direction: column; align-items: center; font-size: 11.500px; line-height: 14px; color: #e6e9eb; white-space: nowrap; }
.red-dot { position: absolute; right: 36px; top: 2px; width: 4px; height: 4px; border-radius: 50%; background: #f03030; }
.notify { position: relative; width: 14px; margin-left: 10px; }
.notify-n { position: absolute; left: 6px; top: 8px; width: 11px; height: 11px; background: #e02020; color: #fff; font-size: 7px; line-height: 11px; text-align: center; }
.tb-edge { width: 2px; height: 32px; background: #555; margin-left: 8px; margin-right: 3px; }

.lens { position: absolute; left: 998px; top: 515px; width: 41px; height: 40px; border-radius: 50%; border: 1px dashed #6aa6e8; background: rgba(235,238,242,.85); z-index: 2; }
.lens-a { position: absolute; left: 15px; top: 8px; width: 10px; height: 4px; background: #d2d4d6; }
.lens-b { position: absolute; left: 5px; top: 15px; width: 30px; height: 6px; background: #c6c9cc; }

/* overlay subtitle */
.subtitle { position: absolute; left: 23px; top: 710px; font-size: 33.500px; line-height: 46px; color: rgba(100,100,100,.5); font-weight: 300; white-space: nowrap; z-index: 3; font-family: "Noto Sans CJK SC", "Noto Sans", sans-serif; }

/* player */
.seek { margin: 77px 24px 0; }
.seek-bar { position: relative; height: 4px; background: #0f1e2b; width: 1096px; }
.seek-fill { display: block; height: 4px; }
.seek-knob { position: absolute; right: -9px; top: -7px; width: 18px; height: 18px; border-radius: 50%; background: #000; border: 2px solid #12283a; }
.seek-rest { position: absolute; left: 1106px; top: 1px; width: 46px; height: 1px; background: #161616; }
.times { display: flex; justify-content: space-between; color: #333; font-size: 11.500px; line-height: 14px; margin-top: 13px; }
.controls { margin-top: 15px; padding: 0 37px 0 36px; display: grid; grid-template-columns: 1fr auto 1fr; }
.ctl-group { display: flex; gap: 26px; }
.ctl-group.end { justify-content: flex-end; }
.c24 { width: 24px; height: 24px; fill: none; stroke: #333; stroke-width: 1.100; }
.ctl-num { font-size: 10px; text-anchor: middle; fill: #333; stroke: none; font-family: "Liberation Sans", sans-serif; }
.dots { stroke: none; fill: #333; }
.watermark { position: absolute; right: 16px; top: 871px; font-size: 17px; line-height: 20px; letter-spacing: .4px; color: #aeaeae; }
```
